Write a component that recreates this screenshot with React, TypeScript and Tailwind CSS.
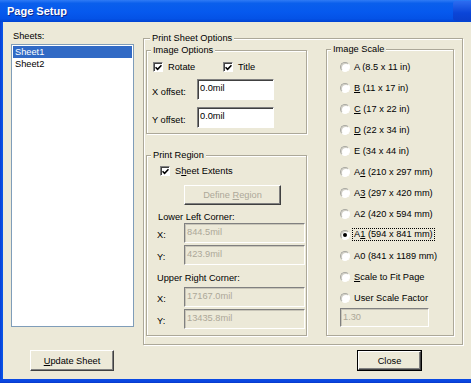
import React from "react";

const Check = ({ checked }: { checked?: boolean }) => (
  <span className="flex h-[10px] w-[10px] shrink-0 items-center justify-center border border-t-[#808080] border-l-[#808080] border-r-white border-b-white bg-white shadow-[inset_1px_1px_0_#404040]">
    {checked && (
      <svg width="7" height="7" viewBox="0 0 7 7">
        <path d="M0.5 3.2 L2.6 5.3 L6.5 1.2" stroke="#000" strokeWidth="1.6" fill="none" />
      </svg>
    )}
  </span>
);

const Radio = ({ on }: { on?: boolean }) => (
  <span className="flex h-[10px] w-[10px] shrink-0 items-center justify-center rounded-full border border-t-[#a8a8a0] border-l-[#a8a8a0] border-r-white border-b-white bg-white shadow-[inset_1px_1px_0_#d0cec4]">
    {on && <span className="h-[4px] w-[4px] rounded-full bg-black" />}
  </span>
);

const Group = ({ title, className, children }: any) => (
  <fieldset
    className={`border border-[#ACA899] shadow-[inset_1px_1px_0_#fff,1px_1px_0_#fff] ${className}`}
  >
    <legend className="ml-[4px] bg-[#ECE9D8] px-[2px] leading-[12px]">{title}</legend>
    {children}
  </fieldset>
);

const Field = ({ value, disabled, className }: any) => (
  <div
    className={`flex items-start border border-t-[#808080] border-l-[#808080] border-r-white border-b-white pl-[2px] pt-[2px] leading-[12px] ${
      disabled
        ? "bg-[#ECE9D8] text-[#ACA899] shadow-[inset_1px_1px_0_#c8c5b8]"
        : "bg-white text-black shadow-[inset_1px_1px_0_#404040]"
    } ${className}`}
  >
    {value}
  </div>
);

const scales = [
  { pre: "", key: "A", post: " (8.5 x 11 in)", u: false },
  { pre: "", key: "B", post: " (11 x 17 in)", u: true },
  { pre: "", key: "C", post: " (17 x 22 in)", u: true },
  { pre: "", key: "D", post: " (22 x 34 in)", u: true },
  { pre: "", key: "E", post: " (34 x 44 in)", u: false },
  { pre: "A", key: "4", post: " (210 x 297 mm)", u: true },
  { pre: "A", key: "3", post: " (297 x 420 mm)", u: true },
  { pre: "A", key: "2", post: " (420 x 594 mm)", u: false },
  { pre: "A", key: "1", post: " (594 x 841 mm)", u: true },
  { pre: "A", key: "0", post: " (841 x 1189 mm)", u: false },
  { pre: "", key: "S", post: "cale to Fit Page", u: true },
  { pre: "", key: "U", post: "ser Scale Factor", u: false },
];

const CoordRow = ({ label, value, className }: any) => (
  <div className={`flex items-center pl-[10px] ${className}`}>
    <span className="w-[27px] pt-[4px]">{label}</span>
    <Field value={value} disabled className="h-[20px] w-[121px]" />
  </div>
);

export default function App() {
  return (
    <div className="flex h-[383px] w-[471px] flex-col overflow-hidden bg-[#ECE9D8] font-['Liberation_Sans',Arial,sans-serif] text-[9.25px] leading-[12px] text-black">
      {/* title bar */}
      <div className="flex h-[22px] shrink-0 items-center bg-[linear-gradient(to_bottom,#2f7bf5_0%,#0a5fec_15%,#0659ee_55%,#0452e6_85%,#0043d2_100%)] pl-[7px]">
        <span className="text-[11px] font-bold text-white [text-shadow:1px_1px_0_#0a2a90]">
          Page Setup
        </span>
        <div className="ml-auto -mr-[8px] h-[20px] w-[26px] rounded-[3px] bg-[linear-gradient(to_bottom,#2d6cf0,#0b45d8_60%,#0a3fcc)]" />
      </div>

      <div className="flex flex-1">
        <div className="w-[3px] bg-[linear-gradient(to_right,#0a3fd6,#0858ea)]" />
        <div className="flex flex-1 flex-col pt-[8px]">
          <div className="flex items-start">
            {/* sheets list */}
            <div className="ml-[8px] flex w-[123px] flex-col">
              <span className="h-[12px] pl-[2px]">Sheets:</span>
              <div className="mt-[2px] h-[283px] border border-[#7F9DB9] bg-white p-[1px]">
                <div className="h-[12px] bg-[#316AC5] pl-[2px] text-white">Sheet1</div>
                <div className="h-[12px] pl-[2px]">Sheet2</div>
              </div>
            </div>

            {/* print sheet options */}
            <fieldset className="ml-[9px] mt-[2px] h-[313px] w-[320px] border border-[#ACA899] shadow-[inset_1px_1px_0_#fff,1px_1px_0_#fff]">
              <legend className="ml-[6px] bg-[#ECE9D8] px-[2px] leading-[12px]">
                Print Sheet Options
              </legend>
              <div className="flex pl-[2px]">
                <div className="flex w-[161px] flex-col">
                  <Group title="Image Options" className="h-[90px]">
                    <div className="mt-[5px] flex h-[12px] items-center pl-[6px]">
                      <div className="flex w-[70px] items-center gap-[5px]">
                        <Check checked />
                        <span>Rotate</span>
                      </div>
                      <div className="flex items-center gap-[5px]">
                        <Check checked />
                        <span>Title</span>
                      </div>
                    </div>
                    <div className="mt-[6px] flex items-center pl-[5px]">
                      <span className="w-[45px] pt-[4px]">X offset:</span>
                      <Field value="0.0mil" className="h-[21px] w-[77px]" />
                    </div>
                    <div className="mt-[7px] flex items-center pl-[5px]">
                      <span className="w-[45px] pt-[4px]">Y offset:</span>
                      <Field value="0.0mil" className="h-[21px] w-[77px]" />
                    </div>
                  </Group>

                  <Group title="Print Region" className="mt-[15px] h-[187px]">
                    <div className="mt-[4px] flex h-[12px] items-center gap-[5px] pl-[13px]">
                      <Check checked />
                      <span>
                        S<span className="underline">h</span>eet Extents
                      </span>
                    </div>
                    <div className="ml-[37px] mt-[8px] flex h-[20px] w-[97px] items-center justify-center border border-t-white border-l-white border-r-[#404040] border-b-[#404040] text-[#ACA899] shadow-[inset_-1px_-1px_0_#808080]">
                      <span>
                        Define <span className="underline">R</span>egion
                      </span>
                    </div>
                    <div className="mt-[6px] h-[12px] pl-[11px]">Lower Left Corner:</div>
                    <CoordRow label="X:" value="844.5mil" />
                    <CoordRow label="Y:" value="423.9mil" className="mt-[2px]" />
                    <div className="mt-[7px] h-[12px] pl-[10px]">Upper Right Corner:</div>
                    <CoordRow label="X:" value="17167.0mil" className="mt-[3px]" />
                    <CoordRow label="Y:" value="13435.8mil" className="mt-[2px]" />
                  </Group>
                </div>

                <Group title="Image Scale" className="-mt-[1px] ml-[19px] h-[293px] w-[128px]">
                  <div className="mt-[1px] flex flex-col">
                    {scales.map((s, i) => (
                      <div key={i} className="flex h-[21px] items-center gap-[3px] pl-[13px]">
                        <Radio on={i === 8} />
                        <span
                          className={
                            i === 8
                              ? "px-[1px] leading-[11px] outline outline-1 outline-dotted outline-black"
                              : "px-[1px]"
                          }
                        >
                          {s.pre}
                          <span className={s.u ? "underline" : ""}>{s.key}</span>
                          {s.post}
                        </span>
                      </div>
                    ))}
                  </div>
                  <Field value="1.30" disabled className="ml-[13px] h-[19px] w-[89px]" />
                </Group>
              </div>
            </fieldset>
          </div>

          {/* buttons */}
          <div className="mt-[5px] flex">
            <div className="ml-[27px] flex h-[21px] w-[84px] items-center justify-center border border-t-white border-l-white border-r-[#404040] border-b-[#404040] shadow-[inset_-1px_-1px_0_#808080]">
              <span>
                <span className="underline">U</span>pdate Sheet
              </span>
            </div>
            <div className="ml-[243px] h-[21px] w-[65px] border border-black">
              <div className="flex h-full w-full items-center justify-center border border-t-white border-l-white border-r-[#404040] border-b-[#404040] shadow-[inset_-1px_-1px_0_#808080]">
                Close
              </div>
            </div>
          </div>
        </div>
      </div>
      <div className="h-[4px] shrink-0 bg-[linear-gradient(to_bottom,#0a4ae4,#0a46e0_60%,#0838c8)]" />
    </div>
  );
}
